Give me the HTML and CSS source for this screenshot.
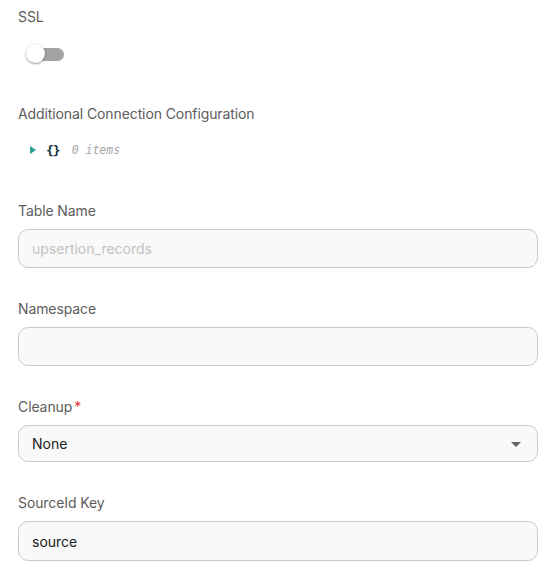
FILE: index.html
```html
<!DOCTYPE html>
<html>
<head>
<meta charset="utf-8">
<link rel="stylesheet" href="styles.css">
</head>
<body>
<div class="form">
  <div class="field-ssl">
    <div class="label">SSL</div>
    <div class="switch">
      <span class="track"></span>
      <span class="thumb"></span>
    </div>
  </div>

  <div class="field-json">
    <div class="label">Additional Connection Configuration</div>
    <div class="json-row">
      <svg class="caret" width="6" height="8" viewBox="0 0 6 8"><path d="M0 0 L6 4 L0 8 Z" fill="#2a9d8f"/></svg>
      <span class="braces">{}</span>
      <span class="count">0 items</span>
    </div>
  </div>

  <div class="fields">
    <div class="field">
      <div class="label">Table Name</div>
      <div class="input"><span class="placeholder">upsertion_records</span></div>
    </div>
    <div class="field">
      <div class="label">Namespace</div>
      <div class="input"></div>
    </div>
    <div class="field">
      <div class="label">Cleanup<span class="req">*</span></div>
      <div class="input select">
        <span class="value">None</span>
        <svg class="arrow" width="24" height="24" viewBox="0 0 24 24"><path d="M7 10l5 5 5-5z" fill="#666"/></svg>
      </div>
    </div>
    <div class="field">
      <div class="label">SourceId Key</div>
      <div class="input"><span class="value">source</span></div>
    </div>
  </div>
</div>
</body>
</html>
```

FILE: styles.css
```css
html, body {
  margin: 0;
  padding: 0;
  background: #ffffff;
}
body {
  font-family: Inter, "Noto Sans", "Liberation Sans", sans-serif;
}
.form {
  padding: 7px 22px 0 18px;
}
.label {
  font-size: 14px;
  line-height: 20px;
  height: 20px;
  color: #5c5c5c;
  letter-spacing: -0.1px;
}
.req {
  color: #e53935;
  margin-left: 2px;
}
.switch {
  position: relative;
  width: 58px;
  height: 38px;
  margin-top: 8px;
}
.track {
  position: absolute;
  left: 9px;
  top: 13px;
  width: 37px;
  height: 13px;
  border-radius: 7px;
  background: #a3a3a3;
}
.thumb {
  position: absolute;
  left: 8px;
  top: 9px;
  width: 19px;
  height: 19px;
  border-radius: 50%;
  background: #ffffff;
  box-shadow: 0 1px 3px rgba(0,0,0,0.3), 0 1px 1px rgba(0,0,0,0.14);
}
.field-json {
  margin-top: 31px;
}
.json-row {
  display: flex;
  align-items: center;
  height: 20px;
  margin-top: 16px;
  padding-left: 12px;
  font-family: "DejaVu Sans Mono", "Liberation Mono", monospace;
}
.caret {
  display: block;
}
.braces {
  margin-left: 10px;
  font-size: 13px;
  font-weight: bold;
  color: #0e2f3d;
  letter-spacing: -1px;
}
.count {
  margin-left: 12px;
  font-size: 11.5px;
  font-style: italic;
  color: #a8a8a8;
}
.fields {
  margin-top: 41px;
  display: flex;
  flex-direction: column;
  gap: 31px;
}
.field {
  display: flex;
  flex-direction: column;
  gap: 8px;
}
.input {
  box-sizing: border-box;
  height: 39px;
  border: 1px solid #c9c9c9;
  border-radius: 10px;
  background: #f9f9f9;
  display: flex;
  align-items: center;
  padding: 0 13px;
  font-size: 14px;
}
.select {
  height: 37px;
  justify-content: space-between;
  padding-right: 9px;
}
.field:last-child .input {
  height: 40px;
}
.placeholder {
  color: #c2c2c2;
}
.value {
  color: #202020;
  font-weight: 400;
}
.arrow {
  display: block;
}
```
